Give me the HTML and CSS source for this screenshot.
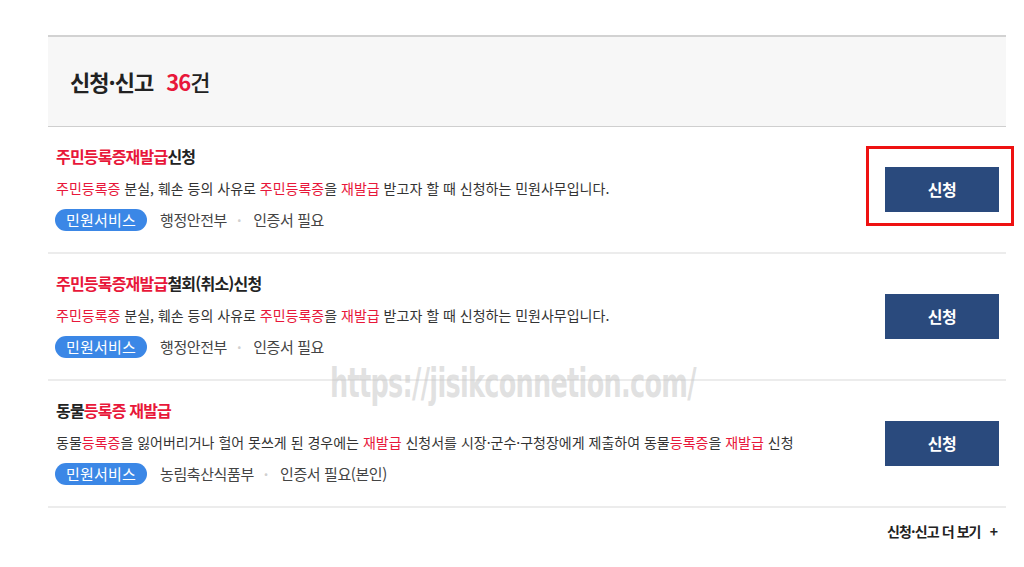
FILE: index.html
```html
<!DOCTYPE html>
<html lang="ko">
<head>
<meta charset="utf-8">
<title>신청·신고</title>
<link rel="stylesheet" href="styles.css">
</head>
<body>
<div class="wrap">
  <div class="head">
    <h2 class="head-title">신청·신고 <span class="count"><em>36</em>건</span></h2>
  </div>
  <ul class="list">
    <li class="item">
      <div class="info">
        <p class="title"><span class="hl">주민등록증재발급</span>신청</p>
        <p class="desc"><span class="hl">주민등록증</span> 분실, 훼손 등의 사유로 <span class="hl">주민등록증</span>을 <span class="hl">재발급</span> 받고자 할 때 신청하는 민원사무입니다.</p>
        <div class="meta"><span class="pill">민원서비스</span><span class="org">행정안전부</span><span class="dot">·</span><span class="req">인증서 필요</span></div>
      </div>
      <div class="act">
        <button class="btn">신청</button>
        <span class="focus-box"></span>
      </div>
    </li>
    <li class="item">
      <div class="info">
        <p class="title"><span class="hl">주민등록증재발급</span>철회(취소)신청</p>
        <p class="desc"><span class="hl">주민등록증</span> 분실, 훼손 등의 사유로 <span class="hl">주민등록증</span>을 <span class="hl">재발급</span> 받고자 할 때 신청하는 민원사무입니다.</p>
        <div class="meta"><span class="pill">민원서비스</span><span class="org">행정안전부</span><span class="dot">·</span><span class="req">인증서 필요</span></div>
      </div>
      <div class="act">
        <button class="btn">신청</button>
      </div>
    </li>
    <li class="item">
      <div class="info">
        <p class="title">동물<span class="hl">등록증 재발급</span></p>
        <p class="desc">동물<span class="hl">등록증</span>을 잃어버리거나 헐어 못쓰게 된 경우에는 <span class="hl">재발급</span> 신청서를 시장·군수·구청장에게 제출하여 동물<span class="hl">등록증</span>을 <span class="hl">재발급</span> 신청</p>
        <div class="meta"><span class="pill">민원서비스</span><span class="org">농림축산식품부</span><span class="dot">·</span><span class="req">인증서 필요(본인)</span></div>
      </div>
      <div class="act">
        <button class="btn">신청</button>
      </div>
    </li>
  </ul>
  <div class="more"><a class="more-link" href="#">신청·신고 더 보기 <span class="plus">+</span></a></div>
  <div class="watermark">https://jisikconnetion.com/</div>
</div>
</body>
</html>
```
FILE: styles.css
```css
* { box-sizing: border-box; }
html, body { margin: 0; padding: 0; background: #fff; }
body {
  font-family: "Noto Sans CJK KR", "Noto Sans", sans-serif;
  color: #333;
}
.wrap {
  position: relative;
  margin: 35px 0 0 48px;
  width: 958px;
}
.head {
  height: 92px;
  background: #f7f7f7;
  border-top: 2px solid #d2d2d2;
  border-bottom: 1px solid #cfcfcf;
  display: flex;
  align-items: center;
  padding-left: 22px;
}
.head-title {
  margin: 0 0 2px;
  font-size: 22px;
  font-weight: 700;
  color: #222;
  letter-spacing: -1px;
  line-height: 1;
}
.count { margin-left: 8px; font-weight: 500; }
.count em { font-style: normal; color: #e8173a; font-weight: 700; }
.list { list-style: none; margin: 0; padding: 0; }
.item {
  height: 127px;
  border-bottom: 2px solid #ececec;
  display: flex;
  align-items: center;
  justify-content: space-between;
  padding-left: 8px;
}
.info { display: flex; flex-direction: column; margin-bottom: 4px; }
.title {
  margin: 0;
  height: 32px;
  font-size: 16px;
  font-weight: 700;
  color: #222;
  letter-spacing: -0.8px;
  line-height: 32px;
}
.hl { color: #e8173a; }
.desc {
  margin: 0;
  height: 32px;
  line-height: 32px;
  font-size: 14px;
  color: #333;
  letter-spacing: 0;
}
.meta {
  height: 32px;
  display: flex;
  align-items: center;
  font-size: 15px;
  color: #444;
  letter-spacing: -0.4px;
}
.pill {
  display: inline-flex;
  align-items: center;
  justify-content: center;
  width: 92px;
  height: 22px;
  margin-left: -1px;
  border-radius: 11px;
  background: #3b87e6;
  color: #fff;
  font-size: 15px;
  letter-spacing: 0.2px;
}
.org { margin-left: 13px; }
.dot { margin: 0 12px 0 10px; color: #d0d0d0; font-weight: 700; font-size: 14px; }
.act { position: relative; margin-right: 7px; }
.btn {
  display: block;
  width: 114px;
  height: 45px;
  padding-bottom: 3px;
  border: 0;
  background: #2a4a7d;
  color: #fff;
  font-family: "Noto Sans CJK KR", sans-serif;
  font-size: 16px;
  font-weight: 700;
  letter-spacing: -0.5px;
}
.focus-box {
  position: absolute;
  left: -19px;
  right: -15px;
  top: -21px;
  bottom: -14px;
  border: 3px solid #ee1111;
  pointer-events: none;
}
.more {
  display: flex;
  justify-content: flex-end;
  padding: 13px 9px 0 0;
}
.more-link {
  color: #222;
  text-decoration: none;
  font-size: 14px;
  font-weight: 700;
  letter-spacing: -0.9px;
}
.plus { margin-left: 6px; font-weight: 700; }
.watermark {
  position: absolute;
  left: 282px;
  top: 325px;
  font-family: "Liberation Sans Narrow", "DejaVu Sans Condensed", sans-serif;
  font-weight: 700;
  font-size: 40px;
  color: rgba(200, 200, 200, 0.55);
  letter-spacing: -1px;
  transform: scaleX(0.71);
  transform-origin: left center;
  pointer-events: none;
}
```
